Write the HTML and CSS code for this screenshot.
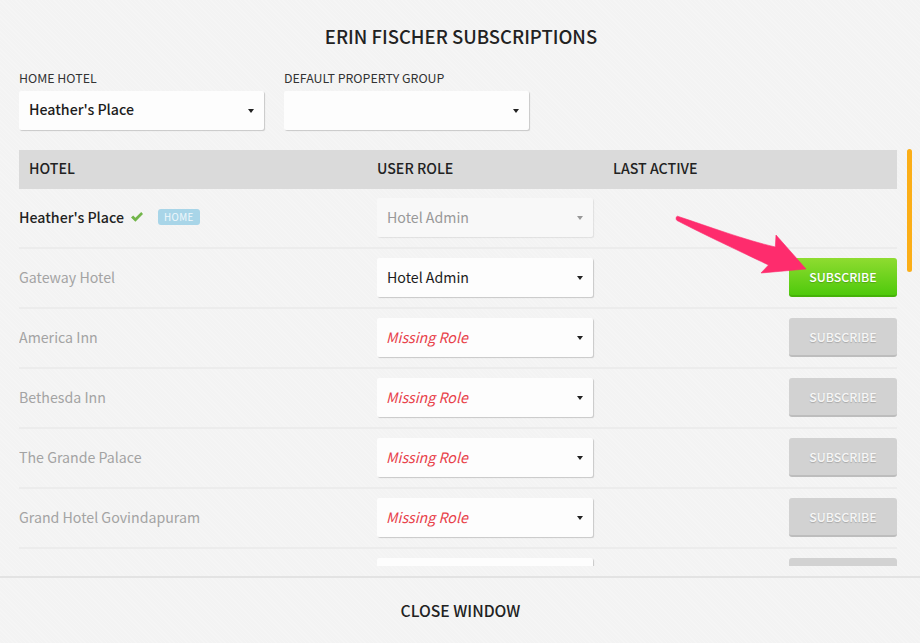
FILE: index.html
```html
<!DOCTYPE html>
<html lang="en">
<head>
    <meta charset="UTF-8">
    <meta name="viewport" content="width=device-width, initial-scale=1.0">
    <title>Erin Fischer Subscriptions</title>
    <link rel="stylesheet" href="styles.css">
</head>
<body>

    <div class="window">
        <div class="content">
            <h1>ERIN FISCHER SUBSCRIPTIONS</h1>

            <div class="fields">
                <div class="field">
                    <label>HOME HOTEL</label>
                    <div class="select select-bold">Heather's Place<span class="caret"></span></div>
                </div>
                <div class="field">
                    <label>DEFAULT PROPERTY GROUP</label>
                    <div class="select"><span class="caret"></span></div>
                </div>
            </div>

            <div class="table-head">
                <div class="col-hotel">HOTEL</div>
                <div class="col-role">USER ROLE</div>
                <div class="col-active">LAST ACTIVE</div>
            </div>

            <div class="rows">
                <div class="row">
                    <div class="col-hotel hotel-home">Heather's Place
                        <svg class="check" width="14" height="12" viewBox="0 0 14 12"><path d="M1 6.6 L3.2 4.6 L5.4 6.8 L11.2 1 L13 3 L5.4 10.8 Z" fill="#72b54a"/></svg>
                        <span class="badge">HOME</span>
                    </div>
                    <div class="col-role"><div class="select select-off">Hotel Admin<span class="caret"></span></div></div>
                </div>
                <div class="row">
                    <div class="col-hotel">Gateway Hotel</div>
                    <div class="col-role"><div class="select">Hotel Admin<span class="caret"></span></div></div>
                    <button class="btn btn-on">SUBSCRIBE</button>
                </div>
                <div class="row">
                    <div class="col-hotel">America Inn</div>
                    <div class="col-role"><div class="select select-missing">Missing Role<span class="caret"></span></div></div>
                    <button class="btn">SUBSCRIBE</button>
                </div>
                <div class="row">
                    <div class="col-hotel">Bethesda Inn</div>
                    <div class="col-role"><div class="select select-missing">Missing Role<span class="caret"></span></div></div>
                    <button class="btn">SUBSCRIBE</button>
                </div>
                <div class="row">
                    <div class="col-hotel">The Grande Palace</div>
                    <div class="col-role"><div class="select select-missing">Missing Role<span class="caret"></span></div></div>
                    <button class="btn">SUBSCRIBE</button>
                </div>
                <div class="row">
                    <div class="col-hotel">Grand Hotel Govindapuram</div>
                    <div class="col-role"><div class="select select-missing">Missing Role<span class="caret"></span></div></div>
                    <button class="btn">SUBSCRIBE</button>
                </div>
                <div class="row">
                    <div class="col-hotel"></div>
                    <div class="col-role"><div class="select select-missing"><span class="caret"></span></div></div>
                    <button class="btn"></button>
                </div>
            </div>
        </div>

        <div class="footer">CLOSE WINDOW</div>

        <!-- overlays -->
        <div class="scrollbar"></div>
        <svg class="arrow" width="920" height="643" viewBox="0 0 920 643">
            <path d="M677.5 216.2 C710 227 745 240 775.3 247 L776 235 L806 269 L761 273 L768.5 265 C735 249 705 235 677 220.5 C675.6 219.5 675.8 216.5 677.5 216.2 Z" fill="#fe2c6d" stroke="#fe2c6d" stroke-width="0.6" stroke-linejoin="round"/>
        </svg>
    </div>

</body>
</html>
```

FILE: styles.css
```css
* {
    box-sizing: border-box;
}
body {
    margin: 0;
    font-family: "Noto Sans CJK SC", "Liberation Sans", sans-serif;
    color: #222;
}
.window {
    position: relative;
    width: 920px;
    height: 643px;
    overflow: hidden;
    display: flex;
    flex-direction: column;
    background-color: #f3f3f3;
    background-image: repeating-linear-gradient(45deg, rgba(255, 255, 255, 0.18) 0 1px, transparent 1px 3px);
}
.content {
    height: 576px;
    padding: 0 23px 10px 19px;
    display: flex;
    flex-direction: column;
}
h1 {
    margin: 0;
    padding-top: 23px;
    padding-left: 6px;
    height: 70px;
    font-size: 18.5px;
    line-height: 26px;
    font-weight: 500;
    text-align: center;
    color: #222;
}

/* home hotel + group selects */
.fields {
    display: flex;
    gap: 20px;
    height: 80px;
}
.field {
    width: 245px;
}
.field label {
    display: block;
    height: 21px;
    font-size: 12.4px;
    line-height: 17px;
    color: #333;
}
.select {
    position: relative;
    height: 39px;
    width: 100%;
    padding-left: 10px;
    font-size: 14.2px;
    line-height: 38px;
    color: #1c1c1c;
    background: #fdfdfd;
    border-radius: 2px;
    box-shadow: 1px 1px 1px rgba(0, 0, 0, 0.18);
}
.select-bold {
    font-weight: 500;
    line-height: 36px;
}
.select-off {
    background: #f8f8f8;
    color: #999;
    box-shadow: 1px 1px 1px rgba(0, 0, 0, 0.08);
}
.select-off .caret {
    border-top-color: #999;
}
.select-missing {
    padding-left: 9px;
    color: #e8414a;
    font-style: italic;
}
.caret {
    position: absolute;
    right: 10px;
    top: 18px;
    border-left: 3px solid transparent;
    border-right: 3px solid transparent;
    border-top: 4px solid #222;
}

/* table */
.table-head {
    display: flex;
    align-items: center;
    height: 39px;
    padding-bottom: 3px;
    background: #dadada;
    font-size: 14.2px;
    font-weight: 500;
    color: #222;
}
.table-head .col-hotel {
    padding-left: 10px;
}
.col-hotel {
    width: 358px;
    flex-shrink: 0;
}
.col-role {
    width: 216px;
}
.table-head .col-role {
    width: 236px;
}
.rows {
    flex: 1;
    overflow: hidden;
}
.row {
    display: flex;
    align-items: center;
    height: 60px;
    padding-bottom: 2px;
    border-bottom: 2px solid #ececec;
    font-size: 14.2px;
    color: #a3a3a3;
}
.hotel-home {
    color: #222;
    font-weight: 500;
    display: flex;
    align-items: center;
}
.check {
    margin-left: 6px;
}
.badge {
    margin-left: 14px;
    padding: 0 6px;
    height: 16px;
    line-height: 16px;
    font-size: 9.8px;
    font-weight: 400;
    letter-spacing: 0.4px;
    color: #f0f8fc;
    background: #a8d5e8;
    border-radius: 3px;
}
.btn {
    margin-left: auto;
    width: 108px;
    height: 39px;
    padding: 2px 0 0;
    border: none;
    border-bottom: 2px solid #bdbdbd;
    border-radius: 3px;
    font-family: inherit;
    font-size: 12.3px;
    font-weight: 500;
    color: #f6f6f6;
    background: #d2d2d2;
    text-shadow: 0 1px 1px rgba(0, 0, 0, 0.2);
}
.btn-on {
    color: #fff;
    background: linear-gradient(#8fdc30, #4fc90c);
    border-bottom-color: #45b208;
}

.footer {
    flex: 1;
    border-top: 2px solid #e3e3e3;
    text-align: center;
    font-size: 15.7px;
    font-weight: 500;
    line-height: 65px;
    padding-left: 1px;
    color: #222;
}

.scrollbar {
    position: absolute;
    left: 907px;
    top: 149px;
    width: 5px;
    height: 123px;
    border-radius: 3px;
    background: #fbae17;
}
.arrow {
    position: absolute;
    left: 0;
    top: 0;
    pointer-events: none;
}
```
